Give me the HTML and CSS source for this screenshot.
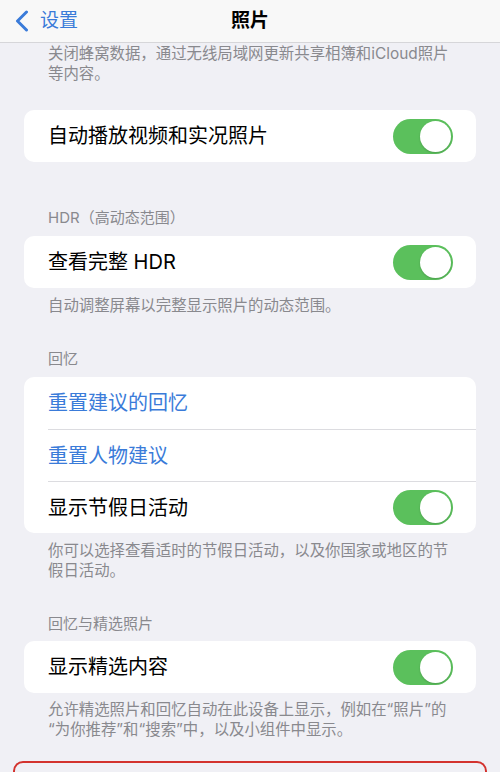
FILE: index.html
```html
<!DOCTYPE html>
<html lang="zh-CN">
<head>
<meta charset="utf-8">
<title>照片</title>
<link rel="stylesheet" href="styles.css">
</head>
<body>
<header class="nav">
  <a class="back">
    <svg class="chevron" width="14" height="22" viewBox="0 0 14 22"><path d="M11.5 2 L2.5 11 L11.5 20" fill="none" stroke="currentColor" stroke-width="3" stroke-linecap="round" stroke-linejoin="round"/></svg>
    <span>设置</span>
  </a>
  <h1 class="title">照片</h1>
  <span></span>
</header>
<main class="content">
  <p class="footnote top">关闭蜂窝数据，通过无线局域网更新共享相簿和iCloud照片等内容。</p>

  <section class="group g-autoplay">
    <div class="card">
      <div class="row"><span class="label">自动播放视频和实况照片</span><span class="toggle"><span class="knob"></span></span></div>
    </div>
  </section>

  <section class="group g-hdr">
    <h2 class="header">HDR（高动态范围）</h2>
    <div class="card">
      <div class="row"><span class="label">查看完整 HDR</span><span class="toggle"><span class="knob"></span></span></div>
    </div>
    <p class="footnote">自动调整屏幕以完整显示照片的动态范围。</p>
  </section>

  <section class="group g-memories">
    <h2 class="header">回忆</h2>
    <div class="card">
      <div class="row"><span class="label link">重置建议的回忆</span></div>
      <div class="row"><span class="label link">重置人物建议</span></div>
      <div class="row"><span class="label">显示节假日活动</span><span class="toggle"><span class="knob"></span></span></div>
    </div>
    <p class="footnote">你可以选择查看适时的节假日活动，以及你国家或地区的节假日活动。</p>
  </section>

  <section class="group g-featured">
    <h2 class="header">回忆与精选照片</h2>
    <div class="card">
      <div class="row"><span class="label">显示精选内容</span><span class="toggle"><span class="knob"></span></span></div>
    </div>
    <p class="footnote">允许精选照片和回忆自动在此设备上显示，例如在“照片”的“为你推荐”和“搜索”中，以及小组件中显示。</p>
  </section>

  <section class="group g-transfer">
    <h2 class="header">传输到MAC或PC</h2>
  </section>
</main>
</body>
</html>
```

FILE: styles.css
```css
html, body {
  margin: 0;
  padding: 0;
}
body {
  width: 500px;
  height: 772px;
  overflow: hidden;
  background: #f0f0f5;
  font-family: "Inter", "Noto Sans CJK SC", "Noto Sans", sans-serif;
  color: #000;
}

.nav {
  height: 43px;
  box-sizing: border-box;
  background: #f8f8f8;
  border-bottom: 1px solid #d6d6d9;
  display: grid;
  grid-template-columns: 1fr auto 1fr;
  align-items: center;
}
.back {
  display: flex;
  align-items: center;
  gap: 11px;
  padding-left: 15px;
  color: #3a7bd9;
  font-size: 19px;
  line-height: 24px;
}
.chevron {
  display: block;
}
.title {
  margin: 0;
  font-size: 19px;
  font-weight: 700;
  line-height: 24px;
}

.content {
  display: flex;
  flex-direction: column;
}

.footnote {
  margin: 8px 0 0;
  padding-left: 48px;
  width: 403px;
  font-size: 15.4px;
  line-height: 20px;
  color: #89898e;
}
.footnote.top {
  margin-top: 1px;
}

.header {
  margin: 0 0 8px;
  padding-left: 48px;
  font-size: 15px;
  font-weight: 400;
  line-height: 20px;
  color: #89898e;
}

.g-autoplay { margin-top: 26px; }
.g-hdr { margin-top: 46px; }
.g-memories { margin-top: 33px; }
.g-featured { margin-top: 33px; }
.g-featured .header { margin-bottom: 7px; }
.g-featured .footnote { margin-top: 7px; }

.card {
  margin: 0 24px;
  background: #fff;
  border-radius: 10px;
  overflow: hidden;
}
.row {
  margin-left: 24px;
  padding-right: 23px;
  height: 52px;
  box-sizing: border-box;
  display: flex;
  align-items: center;
  justify-content: space-between;
}
.row + .row {
  border-top: 1px solid #dcdce0;
}
.label {
  font-size: 20px;
  line-height: 26px;
}
.label.link {
  color: #3a7bd9;
}

.toggle {
  width: 60px;
  height: 35px;
  box-sizing: border-box;
  padding: 2px;
  border-radius: 18px;
  background: #5bc05c;
  display: flex;
  justify-content: flex-end;
  align-items: center;
}
.knob {
  width: 31px;
  height: 31px;
  border-radius: 50%;
  background: #fff;
  box-shadow: 0 1px 2px rgba(0, 0, 0, 0.18);
}

.g-transfer {
  margin: 21px 13px 0;
  border: 2px solid #d3332e;
  border-radius: 10px;
  padding-top: 9px;
  height: 120px;
}
.g-transfer .header {
  padding-left: 33px;
  color: #aaaab0;
}
```
